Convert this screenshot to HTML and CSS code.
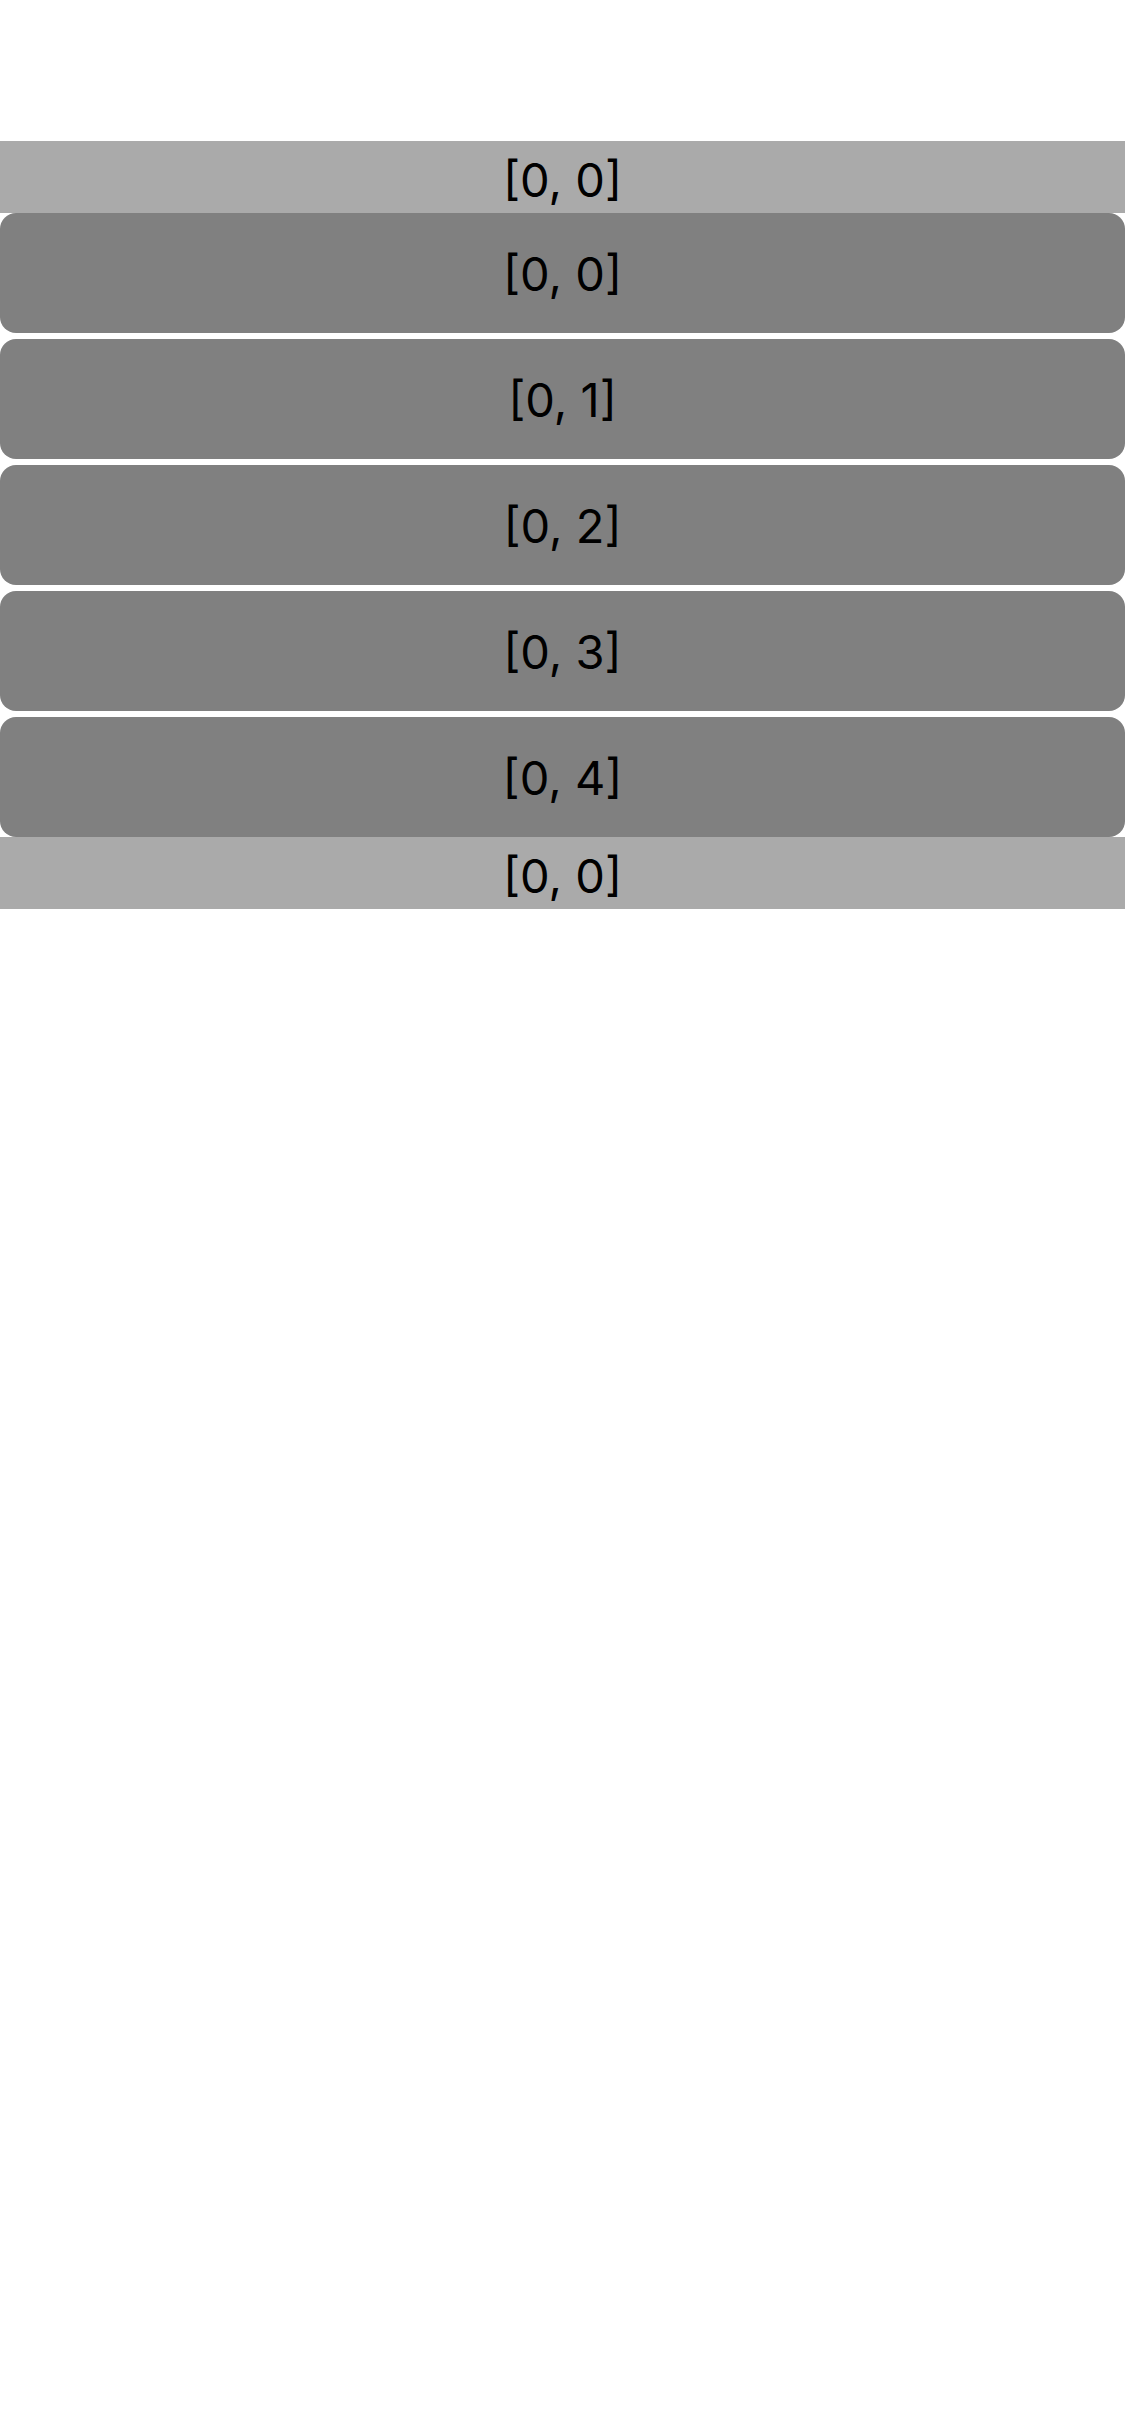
FILE: index.html
```html
<!DOCTYPE html>
<html>
<head>
<meta charset="utf-8">
<link rel="stylesheet" href="styles.css">
</head>
<body>
<div class="screen">
  <div class="section-bar">[0, 0]</div>
  <div class="list">
    <div class="cell">[0, 0]</div>
    <div class="cell">[0, 1]</div>
    <div class="cell">[0, 2]</div>
    <div class="cell">[0, 3]</div>
    <div class="cell">[0, 4]</div>
  </div>
  <div class="section-bar">[0, 0]</div>
</div>
</body>
</html>
```
FILE: styles.css
```css
html, body {
  margin: 0;
  padding: 0;
  background: #ffffff;
}
body {
  font-family: Inter, "Noto Sans", sans-serif;
  color: #000000;
}
.screen {
  padding-top: 141px;
  display: flex;
  flex-direction: column;
}
.section-bar {
  height: 72px;
  background: #aaaaaa;
  display: flex;
  align-items: center;
  justify-content: center;
  font-size: 47px;
  padding-top: 4px;
  box-sizing: border-box;
}
.list {
  display: flex;
  flex-direction: column;
  gap: 6px;
}
.cell {
  height: 120px;
  background: #808080;
  border-radius: 16px;
  display: flex;
  align-items: center;
  justify-content: center;
  font-size: 47px;
}
```
